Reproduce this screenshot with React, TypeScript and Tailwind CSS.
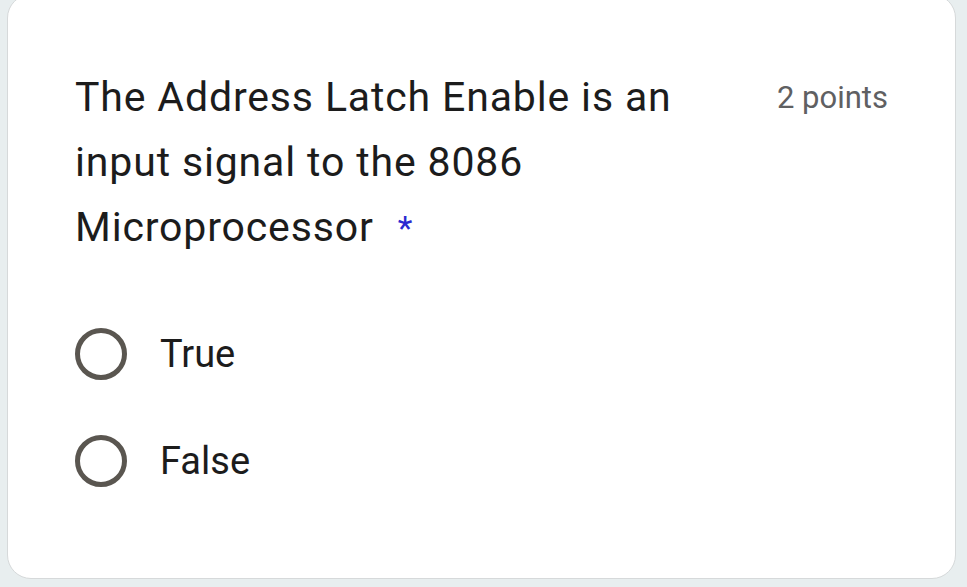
import React from "react";

function Radio() {
  return <div className="w-[52px] h-[52px] rounded-full border-[5px] border-[#5a5650] shrink-0" />;
}

export default function App() {
  return (
    <div className="w-[967px] h-[587px] bg-[#e8eeef] overflow-hidden" style={{ fontFamily: "Roboto, 'Liberation Sans', sans-serif" }}>
      <div className="ml-[7px] mt-[-6px] w-[949px] h-[585px] bg-white border border-[#d6d9da] rounded-[24px] pt-[70px] px-[67px]">
        <div className="flex justify-between items-start">
          <div className="w-[650px] text-[41px] leading-[65px] tracking-[0.85px] text-[#1c1c1c]">
            The Address Latch Enable is an input signal to the 8086 Microprocessor
            <span className="inline-block ml-[24px] pt-[2px] text-[34px] leading-[63px] text-[#2a2ad0] align-top">*</span>
          </div>
          <div className="text-[31px] leading-[65px] text-[#5f6062]">2 points</div>
        </div>
        <div className="mt-[68px] flex flex-col gap-[55px]">
          <div className="flex items-center gap-[33px]">
            <Radio />
            <span className="text-[38px] leading-none text-[#1c1c1c]">True</span>
          </div>
          <div className="flex items-center gap-[33px]">
            <Radio />
            <span className="text-[38px] leading-none text-[#1c1c1c]">False</span>
          </div>
        </div>
      </div>
    </div>
  );
}
